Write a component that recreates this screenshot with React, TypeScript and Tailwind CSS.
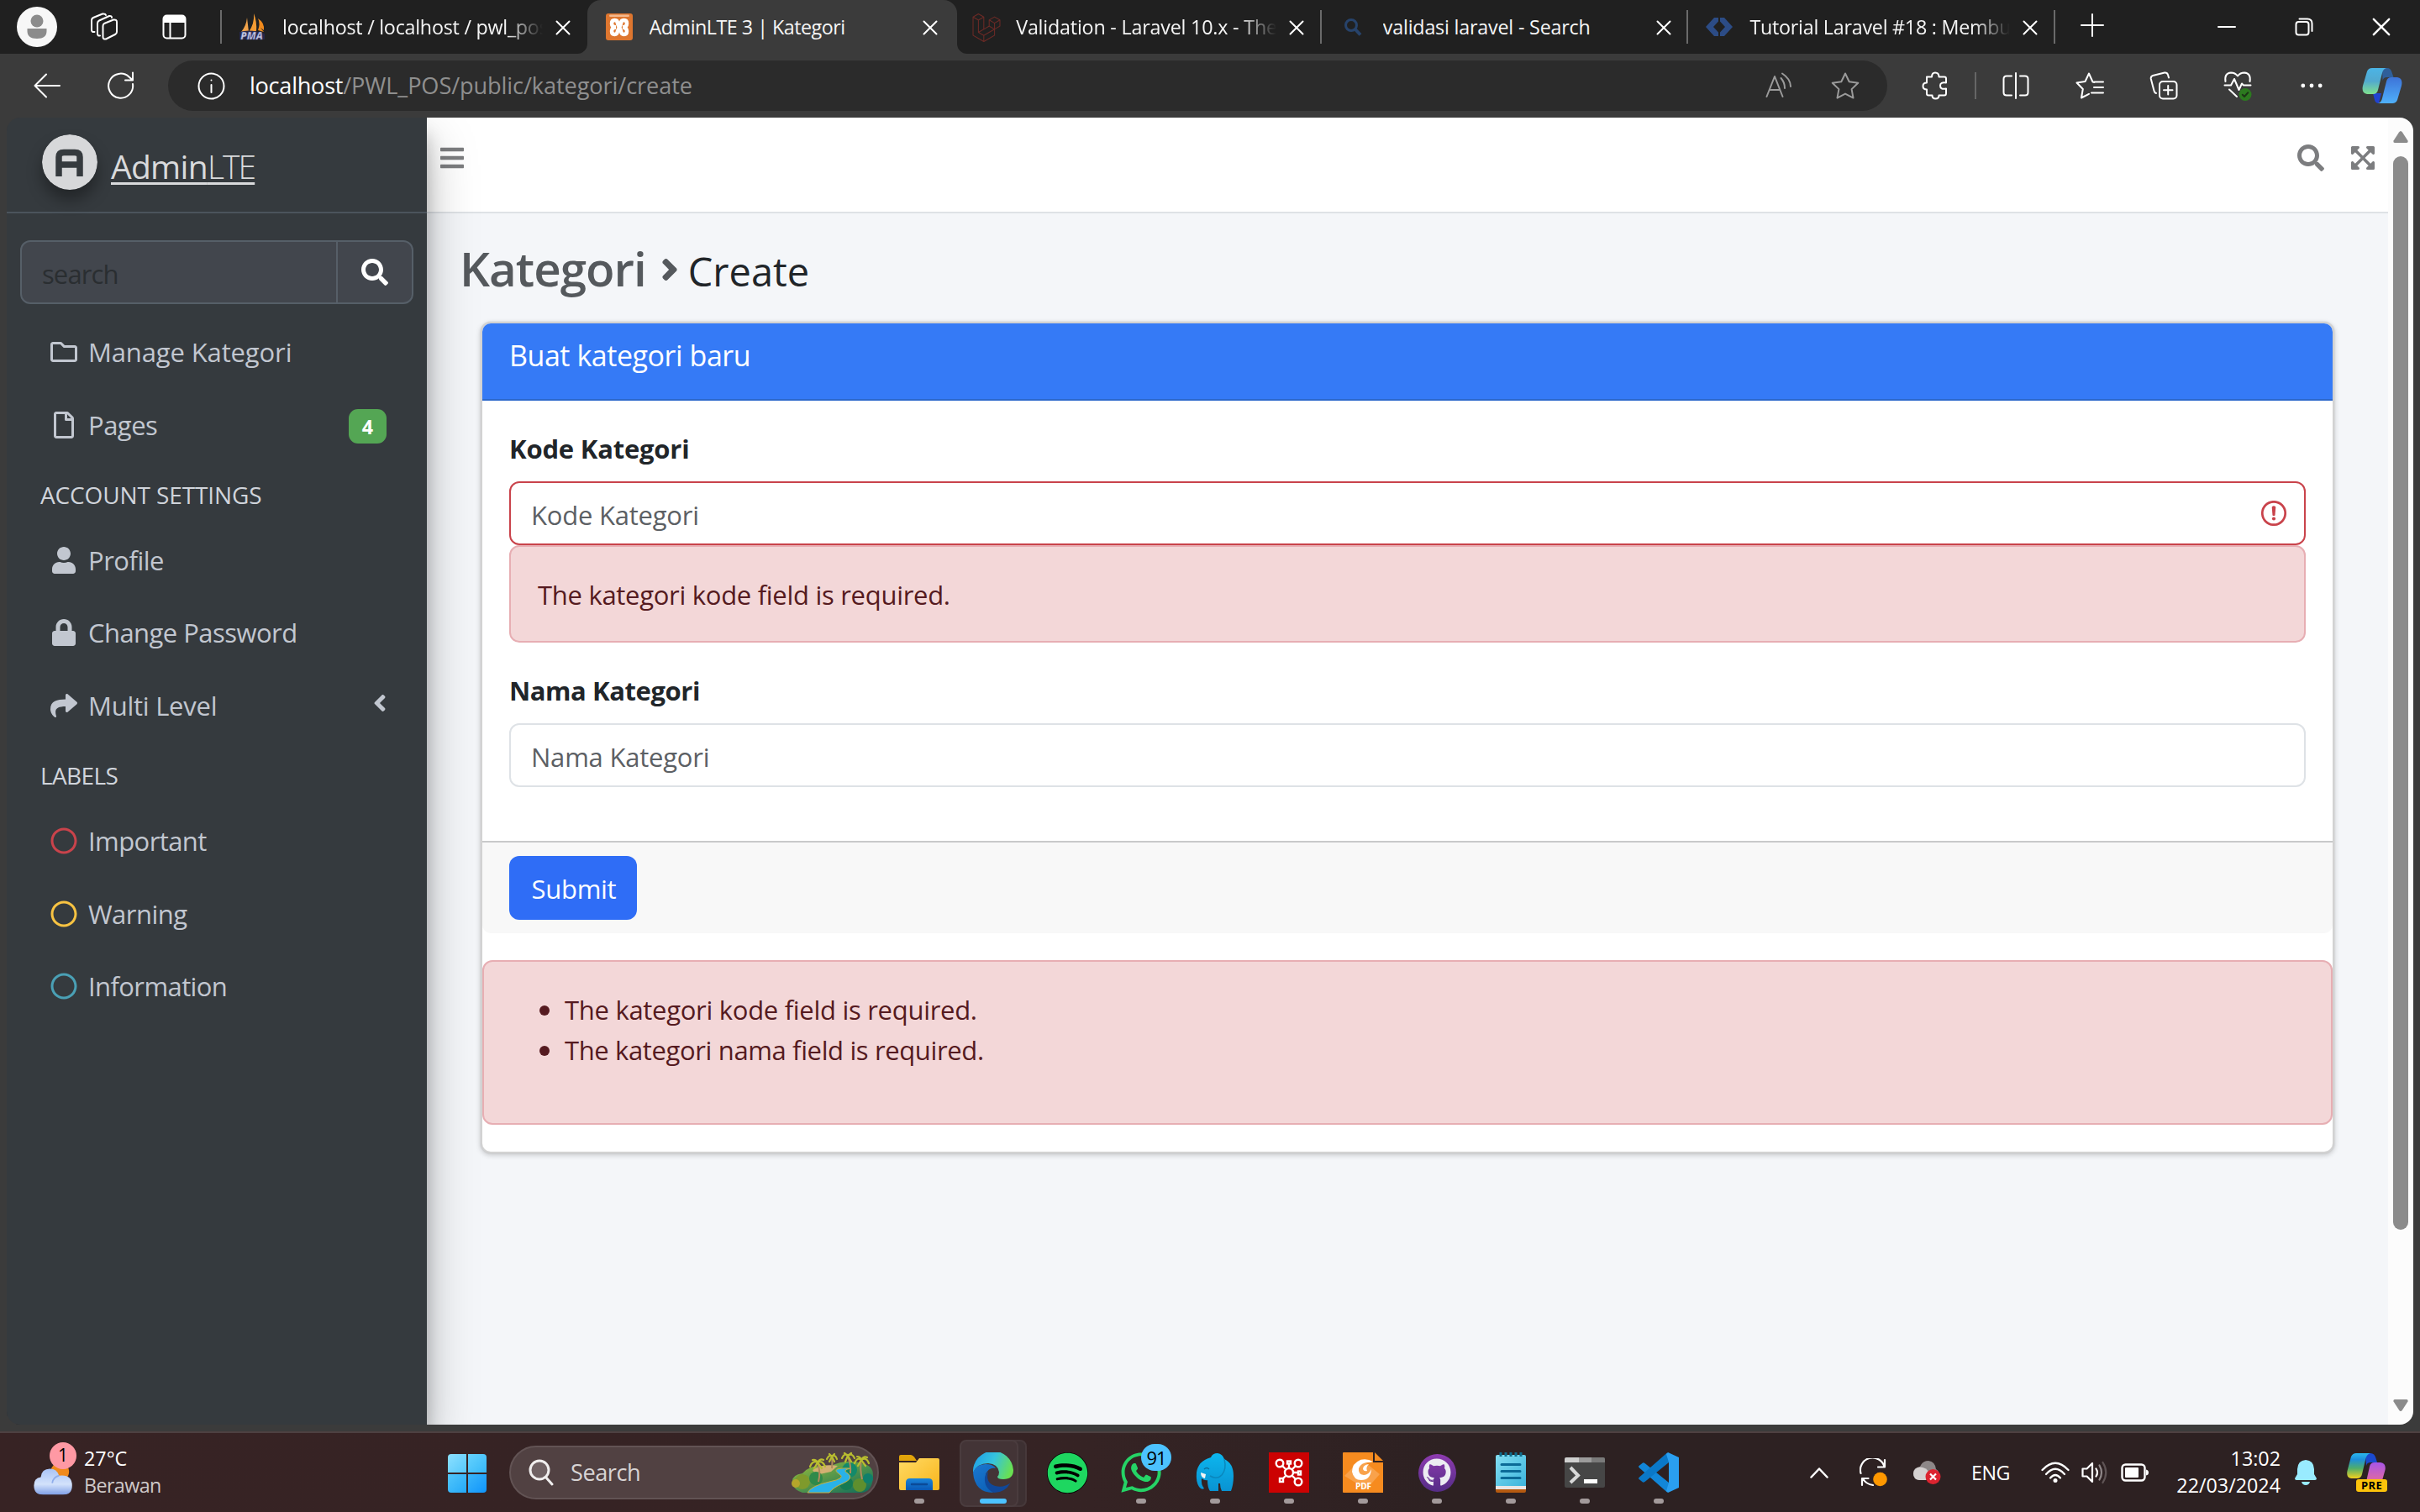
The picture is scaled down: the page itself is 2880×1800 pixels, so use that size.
import React from "react";
import {
  FaAngleLeft,
  FaAngleRight,
  FaBars,
  FaExpandArrowsAlt,
  FaGithub,
  FaLaravel,
  FaLock,
  FaRegCircle,
  FaRegFile,
  FaRegFolder,
  FaSearch,
  FaShare,
  FaSpotify,
  FaUser,
  FaWhatsapp,
} from "react-icons/fa";

type SvgProps = React.SVGProps<SVGSVGElement>;

const Line = ({ children, ...p }: SvgProps) => (
  <svg fill="none" stroke="currentColor" strokeWidth={2} strokeLinecap="round" strokeLinejoin="round" {...p}>
    {children}
  </svg>
);

/* ---------- Browser tab favicons ---------- */

const PmaIcon = () => (
  <svg width="32" height="32" viewBox="0 0 32 32">
    <path d="M10 5 L12 22 L3 22 Q9 15 10 5Z" fill="#f2a34a" />
    <path d="M18 0 Q22 10 21 21 L12 22 Q19 12 18 0Z" fill="#f49b33" />
    <path d="M23 6 Q31 11 30 20 L26 17 L30 22 L23 20 Q26 12 23 6Z" fill="#f08a1c" />
    <path d="M1 22 Q14 18 31 24 L31 31 L1 31Z" fill="#24264a" />
    <text x="15.500" y="31" textAnchor="middle" fontFamily="Open Sans" fontWeight="800" fontStyle="italic" fontSize="12" fill="#c9cbe6" stroke="#4a4f86" strokeWidth="0.5">
      PMA
    </text>
  </svg>
);

const XamppIcon = () => (
  <svg width="32" height="32" viewBox="0 0 32 32">
    <rect width="32" height="32" rx="3" fill="#de762f" />
    <rect x="4" y="1.500" width="24" height="2.500" rx="1.200" fill="#f3b98f" />
    <g fill="none" stroke="#fff" strokeWidth="4.500" strokeLinejoin="round">
      <path d="M12 16.500 Q7 16 7 12 Q7 8 10.500 8 Q14 8 14 12 L18 21 Q18.500 25 21.500 25 Q25 25 25 21 Q25 17 20 16.500" />
      <path d="M20 16.500 Q25 16 25 12 Q25 8 21.500 8 Q18 8 18 12 L14 21 Q13.500 25 10.500 25 Q7 25 7 21 Q7 17 12 16.500" />
    </g>
  </svg>
);

const BingSearchIcon = () => (
  <svg width="32" height="32" viewBox="0 0 32 32" fill="none" stroke="#27436b">
    <circle cx="14" cy="14" r="6.500" strokeWidth="3" />
    <path d="M18.500 18.500 L25 25.500" strokeWidth="4" />
  </svg>
);

const CodeIcon = () => (
  <svg width="32" height="32" viewBox="0 0 32 32">
    <path d="M15 5 H10 L0 16 L10 27 H15 V22.500 L9 16 L15 9.500Z" fill="#2c4c86" />
    <path d="M17 5 H22 L32 16 L22 27 H17 V22.500 L23 16 L17 9.500Z" fill="#2c4c86" />
  </svg>
);

const CloseIcon = ({ s = 18 }: { s?: number }) => (
  <Line width={s} height={s} viewBox="0 0 18 18">
    <path d="M1.500 1.500 L16.500 16.500 M16.500 1.500 L1.500 16.500" />
  </Line>
);

type TabProps = { icon: React.ReactNode; title: string; track: string; active?: boolean; sep?: boolean; fade?: boolean };

const Tab = ({ icon, title, track, active, sep, fade }: TabProps) => (
  <div className="relative flex h-16 w-[436.6px] shrink-0 items-center">
    {active && (
      <>
        <div className="absolute inset-y-0 -left-px w-[440px] rounded-t-2xl bg-[#3b3b3b]" />
        <svg className="absolute bottom-0 -left-[13px]" width="12" height="12" viewBox="0 0 12 12">
          <path d="M12 0 V12 H0 A12 12 0 0 0 12 0Z" fill="#3b3b3b" />
        </svg>
        <svg className="absolute bottom-0 left-[439px] z-10" width="12" height="12" viewBox="0 0 12 12">
          <path d="M0 0 V12 H12 A12 12 0 0 1 0 0Z" fill="#3b3b3b" />
        </svg>
      </>
    )}
    <div className="relative ml-[21px] size-8">{icon}</div>
    <div className={`relative ml-5 w-[310px] overflow-hidden whitespace-nowrap text-[23.3px] leading-8 text-[#f5f5f5] ${track} ${fade ? "[mask-image:linear-gradient(to_right,black_86%,transparent)]" : ""}`}>
      {title}
    </div>
    <div className="relative ml-[15px] pt-0.5 text-white">
      <CloseIcon />
    </div>
    {sep && <div className="absolute right-0 h-10 w-0.5 bg-[#6a6a6a]" />}
  </div>
);

const TabBar = () => (
  <div className="flex h-16 items-center bg-[#202020] pl-5 text-white">
    <svg width="48" height="48" viewBox="0 0 48 48">
      <circle cx="24" cy="24" r="24" fill="#f7f7f7" />
      <circle cx="24" cy="17" r="7.500" fill="#8c8c8c" />
      <path d="M12.500 26 h23 v3 q0 9 -11.500 9 t-11.500 -9z" fill="#8c8c8c" />
    </svg>
    <Line className="ml-[39px]" width="34" height="34" viewBox="0 0 34 34">
      <path d="M17 13 L28 8.500 Q32 8 32 11 V23 Q32 25 30 26 L19 31.500 Q15.500 32 15.500 29 V16 Q15.500 14 17 13Z" />
      <path d="M12 27.500 Q9 28 9 25 V13 Q9 10.500 11 9.500 L23 4 Q26 3.500 26 6" />
      <path d="M5.500 23 Q2 23.500 2 20.500 V9 Q2 7 4 6 L15 1.500 Q18.500 1 19 3" />
    </Line>
    <Line className="ml-[52px]" width="29" height="30" viewBox="0 0 29 30">
      <rect x="1.500" y="1.500" width="26" height="27" rx="4" />
      <path d="M2 6 q0 -4 4 -4 h17 q4 0 4 4 v3 h-25z" fill="currentColor" />
      <path d="M9.500 9 V28" />
    </Line>
    <div className="ml-10 mr-[-1px] h-10 w-0.5 bg-[#6a6a6a]" />
    <Tab icon={<PmaIcon />} title="localhost / localhost / pwl_pos" track="tracking-[-0.25px]" fade />
    <Tab icon={<XamppIcon />} title="AdminLTE 3 | Kategori" track="tracking-[-0.5px]" active />
    <Tab icon={<FaLaravel size={34} color="#6b2a26" />} title="Validation - Laravel 10.x - The" track="tracking-[-0.2px]" sep fade />
    <Tab icon={<BingSearchIcon />} title="validasi laravel - Search" track="tracking-[-0.2px]" sep />
    <Tab icon={<CodeIcon />} title="Tutorial Laravel #18 : Membu" track="tracking-[-0.25px]" sep fade />
    <Line className="ml-[30px] mb-1" width="28" height="28" viewBox="0 0 28 28">
      <path d="M14 1 V27 M1 14 H27" />
    </Line>
    <div className="ml-auto flex">
      <div className="flex w-[92px] justify-center">
        <Line width="22" height="22" viewBox="0 0 22 22">
          <path d="M1 11 H21" />
        </Line>
      </div>
      <div className="flex w-[92px] justify-center">
        <Line width="22" height="22" viewBox="0 0 22 22">
          <rect x="1.500" y="5" width="15" height="15.500" rx="3" />
          <path d="M5.500 1.500 H15 Q20.500 1.500 20.500 7 V16" />
        </Line>
      </div>
      <div className="flex w-[92px] justify-center">
        <CloseIcon s={22} />
      </div>
    </div>
  </div>
);

/* ---------- Address bar ---------- */

const EdgeCopilotIcon = () => (
  <svg width="48" height="44" viewBox="0 0 48 44">
    <defs>
      <linearGradient id="ecA" x1="0" y1="0" x2="0" y2="1">
        <stop offset="0" stopColor="#4bb4e6" />
        <stop offset="0.5" stopColor="#52a9cf" />
        <stop offset="1" stopColor="#7fe08e" />
      </linearGradient>
      <linearGradient id="ecB" x1="0" y1="0" x2="0" y2="1">
        <stop offset="0" stopColor="#3d73d8" />
        <stop offset="1" stopColor="#4fb0fa" />
      </linearGradient>
    </defs>
    <path d="M24 1 h6 q4 0 5.500 5 l2 6 h-8 q-4 0 -5 4z" fill="#2f5f9a" />
    <path d="M13 31 h10 l-3 12 q-4 0 -5 -4z" fill="#2143cf" />
    <path d="M12 1 H29 Q25 2 24 7 L19 27 Q18 32 13 32 H6 Q-1 31 1 22 L6 5 Q7.500 1 12 1Z" fill="url(#ecA)" />
    <path d="M36 43 H19 Q23 42 24 37 L29 17 Q30 12 35 12 H42 Q49 13 47 22 L42 39 Q40.500 43 36 43Z" fill="url(#ecB)" />
  </svg>
);

const ToolButton = ({ children }: { children: React.ReactNode }) => (
  <div className="flex w-[88px] justify-center">{children}</div>
);

const AddressBar = () => (
  <div className="flex h-[76px] items-center bg-[#3b3b3b] pl-10 text-white">
    <Line width="32" height="30" viewBox="0 0 32 30">
      <path d="M31 15 H1.500 M15 1.500 L1.500 15 L15 28.500" />
    </Line>
    <Line className="ml-14" width="32" height="34" viewBox="0 0 32 34">
      <path d="M30 15 A14.500 14.500 0 1 1 25.500 6.500 L30 10.500 M30 1.500 V10.500 H21" />
    </Line>
    <div className="ml-10 flex h-[60px] w-[2046px] items-center rounded-full bg-[#2b2b2b] pl-[35px] pr-[33px]">
      <Line width="33" height="33" viewBox="0 0 33 33">
        <circle cx="16.500" cy="16.500" r="15" />
        <path d="M16.500 15 V24" />
        <circle cx="16.500" cy="9.500" r="1" fill="currentColor" stroke="none" />
      </Line>
      <div className="ml-[29px] whitespace-nowrap text-[27.2px] leading-10">
        <span className="tracking-[-0.3px]">localhost</span>
        <span className="tracking-[-0.12px] text-[#8f8f8f]">/PWL_POS/public/kategori/create</span>
      </div>
      <div className="ml-auto flex items-center text-[#9b9b9b]">
        <Line width="32" height="32" viewBox="0 0 32 32">
          <path d="M1.500 29 L11 5 L20.500 29 M5 21 H17" />
          <path d="M18.500 7 Q23 12 23 19" />
          <path d="M20 1.500 Q30 8 30 17" />
        </Line>
        <Line className="ml-[46px]" width="34" height="32" viewBox="0 0 34 32">
          <path d="M17 1.500 L21.700 11.200 L32.300 12.700 L24.600 20.100 L26.500 30.600 L17 25.600 L7.500 30.600 L9.400 20.100 L1.700 12.700 L12.300 11.200Z" />
        </Line>
      </div>
    </div>
    <Line className="ml-[41px]" width="32" height="34" viewBox="0 0 32 34">
      <path d="M6 6.500 H12 Q12 1.500 16 1.500 Q20.500 1.500 20.500 6.500 H27 Q29 6.500 29 8.500 V13.500 Q22 12.500 22 17 Q22 22 29 20.500 V26 Q29 28.500 27 28.500 H20.500 Q20.500 32.500 16.500 32.500 Q12.500 32.500 12.500 28.500 H8 Q6 28.500 6 26.500 V21.500 Q1.500 21.500 1.500 17.500 Q1.500 13.500 6 13.500Z" />
    </Line>
    <div className="ml-[31px] mr-[3px] h-8 w-0.5 bg-[#666]" />
    <ToolButton>
      <Line width="32" height="34" viewBox="0 0 32 34">
        <path d="M16 2 V32 M11 5.500 H5 Q1.500 5.500 1.500 9 V25 Q1.500 28.500 5 28.500 H11 M21 5.500 H27 Q30.500 5.500 30.500 9 V25 Q30.500 28.500 27 28.500 H21" />
      </Line>
    </ToolButton>
    <ToolButton>
      <Line width="34" height="32" viewBox="0 0 34 32">
        <path d="M22.500 12 L20.500 11.500 L16 1.500 L11.500 11 L1.500 12.500 L8.800 20 L7 30.500 L16 25.800 M22 11.500 H33 M22 18 H33 M19 24.500 H33" />
      </Line>
    </ToolButton>
    <ToolButton>
      <Line width="34" height="34" viewBox="0 0 34 34">
        <rect x="12" y="12" width="20.500" height="20.500" rx="4" />
        <path d="M22.200 17 V27.500 M17 22.200 H27.500" />
        <path d="M8 26 Q6 25.500 5.500 23 L1.800 9 Q1.300 6 4 5 L18 1.500 Q21 1 22 4 L23 7.500" />
      </Line>
    </ToolButton>
    <ToolButton>
      <svg width="34" height="36" viewBox="0 0 34 36" fill="none" stroke="currentColor" strokeWidth="2" strokeLinejoin="round" strokeLinecap="round">
        <path d="M2.500 13 Q1 3 9 2.500 Q14 2.500 17 6.500 Q20 2.500 25 2.500 Q33 3 31.500 13" />
        <path d="M1.500 17.500 H9 L13 10 L18.500 23 L22 15.500 L24 17.500 H32.500" />
        <path d="M7 22.500 L16 31" />
        <circle cx="26" cy="28.500" r="7.500" fill="#2c7a1f" stroke="none" />
        <path d="M22.800 28.800 L25 31 L29.300 26.300" stroke="#1c3516" />
      </svg>
    </ToolButton>
    <ToolButton>
      <svg width="26" height="6" viewBox="0 0 26 6" fill="currentColor">
        <circle cx="2.800" cy="3" r="2.400" />
        <circle cx="13" cy="3" r="2.400" />
        <circle cx="23.200" cy="3" r="2.400" />
      </svg>
    </ToolButton>
    <div className="ml-4">
      <EdgeCopilotIcon />
    </div>
  </div>
);

/* ---------- Sidebar ---------- */

type NavProps = { icon: React.ReactNode; label: string; track: string; right?: React.ReactNode };

const NavItem = ({ icon, label, track, right }: NavProps) => (
  <div className="flex h-[86.4px] items-center pl-[52px] pr-12 text-[#c2c7d0]">
    <div className="size-8 text-[32px]">{icon}</div>
    <div className={`ml-[13px] whitespace-nowrap text-[31px] leading-[48px] ${track}`}>{label}</div>
    <div className="ml-auto">{right}</div>
  </div>
);

const NavHeader = ({ label, track }: { label: string; track: string }) => (
  <div className={`flex h-[75px] items-center pl-10 pt-[5px] text-[28px] leading-10 text-[#d0d4db] ${track}`}>{label}</div>
);

const Sidebar = () => (
  <div className="relative z-10 h-full w-[500px] shrink-0 bg-[#353a3e] shadow-[0_28px_56px_rgba(0,0,0,0.25),0_20px_20px_rgba(0,0,0,0.22)]">
    <div className="flex h-[114px] items-start border-b-2 border-[#4b545c] pl-[42px] pt-5">
      <svg className="rounded-full shadow-[0_12px_18px_rgba(0,0,0,0.35)]" width="66" height="66" viewBox="0 0 66 66">
        <circle cx="33" cy="33" r="33" fill="#d7d8da" />
        <path d="M20 50 V27 Q20 21.500 26 21.500 H39 Q45 21.500 45 27 V50 M20 36 H45" fill="none" stroke="#353a3e" strokeWidth="7.500" />
      </svg>
      <div className="ml-4 mt-3 whitespace-nowrap text-[39px] leading-[52px] text-[#d9dadc] underline decoration-[3px] underline-offset-[4px]">
        <span className="tracking-[-0.7px]">Admin</span>
        <span className="font-light tracking-[-1.900px]">LTE</span>
      </div>
    </div>
    <div className="mx-4 mb-[14px] mt-8 flex h-[76px] w-[468px] rounded-[12px] border-2 border-[#565f68] bg-[#42464d]">
      <div className="flex w-[374px] items-center pl-[24px] pt-[3px] text-[31px] leading-[48px] tracking-[-0.9px] text-[#2a2e31]">search</div>
      <div className="flex flex-1 items-center justify-center border-l-2 border-[#565f68] pr-px text-[32px] text-white">
        <FaSearch />
      </div>
    </div>
    <NavItem icon={<FaRegFolder />} label="Manage Kategori" track="tracking-[-0.13px]" />
    <NavItem
      icon={<FaRegFile />}
      label="Pages"
      track="tracking-[-0.500px]"
      right={<div className="mt-1 flex h-[41px] w-[45px] items-center justify-center rounded-[11px] bg-[#54a654] pt-0.5 text-[23.300px] font-bold text-white">4</div>}
    />
    <NavHeader label="ACCOUNT SETTINGS" track="tracking-[-0.12px]" />
    <NavItem icon={<FaUser />} label="Profile" track="tracking-[-0.500px]" />
    <NavItem icon={<FaLock />} label="Change Password" track="tracking-[-0.55px]" />
    <NavItem
      icon={<FaShare />}
      label="Multi Level"
      track="tracking-[-0.25px]"
      right={<FaAngleLeft className="-mr-2 -mt-1.5" size={32} />}
    />
    <NavHeader label="LABELS" track="tracking-[-0.6px]" />
    <NavItem icon={<FaRegCircle className="text-[#c9434b]" />} label="Important" track="tracking-[-0.58px]" />
    <NavItem icon={<FaRegCircle className="text-[#f8c342]" />} label="Warning" track="tracking-[-0.500px]" />
    <NavItem icon={<FaRegCircle className="text-[#4aa0b5]" />} label="Information" track="tracking-[-0.6px]" />
  </div>
);

/* ---------- Main content ---------- */

const Field = ({ label, labelTrack, invalid }: { label: string; labelTrack: string; invalid?: boolean }) => (
  <>
    <div className={`text-[31px] font-bold leading-[48px] text-[#212529] ${labelTrack}`}>{label}</div>
    <div className={`mt-[15px] flex h-[76px] items-center justify-between rounded-[12px] border-2 bg-white pl-6 pr-[21px] pt-0.5 ${invalid ? "border-[#c9434b]" : "border-[#dee2e6]"}`}>
      <div className="pt-0.5 text-[31px] leading-[48px] tracking-[-0.22px] text-[#5c6064]">{label}</div>
      {invalid && (
        <svg className="-mt-0.5" width="30" height="30" viewBox="0 0 30 30">
          <circle cx="15" cy="15" r="13.700" fill="none" stroke="#c9434b" strokeWidth="2.700" />
          <path d="M12.700 7.500 Q15 4.800 17.300 7.500 L16.500 17.500 Q15 18.500 13.500 17.500Z" fill="#c9434b" />
          <circle cx="15" cy="21.500" r="2.100" fill="#c9434b" />
        </svg>
      )}
    </div>
  </>
);

const errors = [
  { text: "The kategori kode field is required.", track: "tracking-[-0.29px]" },
  { text: "The kategori nama field is required.", track: "tracking-[-0.37px]" },
];

const Card = () => (
  <div className="ml-16 w-[2206px] rounded-[12px] border-2 border-black/[0.175] bg-white shadow-[0_0_2px_rgba(0,0,0,0.125),0_2px_6px_rgba(0,0,0,0.2)]">
    <div className="h-[92px] rounded-t-[10px] border-b-2 border-[#2c67ca] bg-[#357af6] pl-8 pt-[18px] text-[34px] leading-[40px] tracking-[-0.45px] text-white">
      Buat kategori baru
    </div>
    <div className="px-8 pb-16 pt-[33px]">
      <Field label="Kode Kategori" labelTrack="tracking-[-0.2px]" invalid />
      <div className="mb-[33px] flex h-[116px] items-center rounded-[12px] border-2 border-[#e7aeb3] bg-[#f3d7d8] pl-8 pt-0.5 text-[31px] tracking-[-0.29px] text-[#551a20]">
        The kategori kode field is required.
      </div>
      <Field label="Nama Kategori" labelTrack="tracking-[-0.42px]" />
    </div>
    <div className="h-[110px] rounded-b-[10px] border-t-2 border-[#c8c9ca] bg-[#f8f8f8] px-8 py-4">
      <button className="h-[76px] w-[152px] rounded-[12px] bg-[#2f6df6] pl-0.5 pt-0.5 text-[31px] tracking-[-0.3px] text-white">Submit</button>
    </div>
    <div className="my-8 h-[196px] rounded-[12px] border-2 border-[#e7aeb3] bg-[#f3d7d8] pl-[66px] pt-[33px] text-[31px] leading-[48px] text-[#551a20]">
      {errors.map((e) => (
        <div key={e.text} className={`flex items-center ${e.track}`}>
          <span className="mr-[18px] mt-0.5 size-3 rounded-full bg-[#551a20]" />
          {e.text}
        </div>
      ))}
    </div>
  </div>
);

const Main = () => (
  <div className="flex h-full w-[2334px] shrink-0 flex-col bg-[#f4f6f9]">
    <div className="flex h-[114px] shrink-0 items-start border-b-2 border-[#dee2e6] bg-white pl-3.5 pr-3.5 pt-8 text-[32px] text-[#7c7d7f]">
      <FaBars />
      <FaSearch className="ml-auto" />
      <FaExpandArrowsAlt className="ml-[30px]" />
    </div>
    <div className="flex h-[129px] shrink-0 items-center pl-[39px] pt-[6px] text-[#55595d]">
      <div className="flex items-baseline whitespace-nowrap">
        <span className="text-[56.500px] font-semibold leading-[64px] tracking-[-1px]">Kategori</span>
        <FaAngleRight className="-mb-[8px] ml-[8px] h-[40px] w-[40px] stroke-[#55595d] stroke-[14]" />
        <span className="ml-[2px] text-[47px] leading-[64px] text-[#212529]">Create</span>
      </div>
    </div>
    <Card />
  </div>
);

const Scrollbar = () => (
  <div className="flex w-[30px] shrink-0 flex-col items-center bg-[#fcfcfc] pb-4 pl-0 pt-4">
    <svg width="18" height="14" viewBox="0 0 18 14">
      <path d="M9 0 Q10 0 11 1.500 L17.500 11.500 Q18 14 16 14 H2 Q0 14 0.500 11.500 L7 1.500 Q8 0 9 0Z" fill="#8b8b8b" />
    </svg>
    <div className="mt-4 h-[1278px] w-[18px] rounded-full bg-[#8b8b8b]" />
    <svg className="mt-auto" width="18" height="14" viewBox="0 0 18 14">
      <path d="M9 14 Q10 14 11 12.500 L17.500 2.500 Q18 0 16 0 H2 Q0 0 0.500 2.500 L7 12.500 Q8 14 9 14Z" fill="#8b8b8b" />
    </svg>
  </div>
);

/* ---------- Taskbar ---------- */

const WeatherIcon = () => (
  <div className="relative h-16 w-14">
    <svg className="absolute bottom-0.5 left-0.5" width="52" height="40" viewBox="0 0 56 44">
      <defs>
        <linearGradient id="cloud" x1="0" y1="0" x2="0" y2="1">
          <stop offset="0" stopColor="#a9c3f5" />
          <stop offset="0.6" stopColor="#d3e2fb" />
          <stop offset="1" stopColor="#7f9fe6" />
        </linearGradient>
      </defs>
      <circle cx="36" cy="10" r="12" fill="#f08a1c" />
      <path d="M14 40 Q2 40 2 28 Q2 18 11 17 Q12 6 23 6 Q32 6 35 15 Q52 13 52 28 Q52 40 40 40Z" fill="url(#cloud)" />
      <path d="M35 15 Q27 17 26 25" fill="none" stroke="#8fadea" strokeWidth="2" />
    </svg>
    <div className="absolute -top-1 left-[23px] flex size-8 items-center justify-center rounded-full bg-[#ff99a4] text-[21px] text-black">1</div>
  </div>
);

const IslandIcon = () => (
  <svg width="100" height="50" viewBox="0 0 100 50">
    <defs>
      <linearGradient id="hill" x1="0" y1="0" x2="1" y2="1">
        <stop offset="0" stopColor="#9bbf3a" />
        <stop offset="1" stopColor="#0c6b5c" />
      </linearGradient>
    </defs>
    <path d="M2 38 Q0 28 14 26 Q24 14 46 18 Q66 8 84 14 Q98 16 98 28 Q98 48 84 49 H14 Q4 46 2 38Z" fill="url(#hill)" />
    <path d="M26 22 Q38 14 56 17 L48 24 L30 28Z" fill="#d3b072" />
    <circle cx="14" cy="36" r="9" fill="#7f9a2c" />
    <circle cx="6" cy="38" r="5" fill="#b5a62b" />
    <circle cx="30" cy="32" r="8" fill="#2f8a4a" />
    <circle cx="66" cy="38" r="8" fill="#157a52" />
    <circle cx="82" cy="40" r="8" fill="#5f8f2e" />
    <circle cx="92" cy="32" r="6" fill="#0f7f6b" />
    <circle cx="70" cy="22" r="9" fill="#128a6a" />
    <path d="M70 20 Q46 19 58 27 Q66 32 46 36 Q24 41 20 49 H46 Q50 43 62 38 Q76 32 68 26 Q60 22 72 20Z" fill="#29b2e8" stroke="#c8b13e" strokeWidth="1" />
    <g stroke="#b08a5c" strokeWidth="2" fill="none">
      <path d="M32 14 Q36 24 33 36" />
      <path d="M49 6 Q50 14 49 20" />
      <path d="M68 6 Q72 16 71 26" />
      <path d="M84 10 Q82 20 85 33" />
    </g>
    <g stroke="#b9bd2f" strokeWidth="2.200" fill="none" strokeLinecap="round">
      <path d="M23 18 Q26 10 32 13 Q38 10 41 18 M26 10 Q30 9 32 13 Q35 8 39 10 M28 20 L32 13 L37 20" />
      <path d="M43 9 Q46 3 49 6 Q53 3 55 9 M46 3 L49 6 L52 3 M46 12 L49 6 L52 12" />
      <path d="M61 8 Q64 1 68 5 Q73 1 76 8 M64 2 L68 5 L72 2 M65 12 L68 5 L72 12" />
      <path d="M76 14 Q79 6 84 10 Q90 6 93 14 M79 6 Q83 6 84 10 Q87 5 91 7 M80 17 L84 10 L89 17" />
    </g>
  </svg>
);

const ExplorerIcon = () => (
  <svg width="48" height="44" viewBox="0 0 48 44">
    <defs>
      <linearGradient id="fold" x1="0" y1="0" x2="1" y2="1">
        <stop offset="0" stopColor="#ffda63" />
        <stop offset="1" stopColor="#f9b51c" />
      </linearGradient>
      <linearGradient id="foldb" x1="0" y1="0" x2="0" y2="1">
        <stop offset="0" stopColor="#1a84d8" />
        <stop offset="1" stopColor="#0a57b4" />
      </linearGradient>
    </defs>
    <path d="M0 3 Q0 1 2 1 H14 Q16 1 18 3.500 L21 8 H0Z" fill="#e2a40a" />
    <path d="M0 10 H20 L24 5 H46 Q48 5 48 7 V41 Q48 43 46 43 H2 Q0 43 0 41Z" fill="url(#fold)" />
    <path d="M8 43 V34 Q8 29 13 29 H35 Q40 29 40 34 V43Z" fill="url(#foldb)" />
    <path d="M15 36 H33" stroke="#0a4a97" strokeWidth="2.500" strokeLinecap="round" />
  </svg>
);

const EdgeIcon = () => (
  <svg width="48" height="48" viewBox="0 0 48 48">
    <defs>
      <linearGradient id="eA" x1="0" y1="0.200" x2="1" y2="0.500">
        <stop offset="0" stopColor="#1f9fe6" />
        <stop offset="0.500" stopColor="#35c4de" />
        <stop offset="1" stopColor="#69e052" />
      </linearGradient>
      <linearGradient id="eB" x1="0" y1="0" x2="0.600" y2="1">
        <stop offset="0" stopColor="#1b78d0" />
        <stop offset="1" stopColor="#0d62b8" />
      </linearGradient>
    </defs>
    <path d="M0 24 A24 24 0 0 1 48 21 Q48 32 36 32 Q29 32 29 29 Q31 27 31 23.500 Q30 14 18 13 Q5 13 0 24Z" fill="url(#eA)" />
    <path d="M0 24 Q4 14 15 14 Q24 14 27 19 Q19 17 15 26 Q13 38 24 47.900 Q2 48 0 24Z" fill="url(#eB)" />
    <path d="M18 23 Q14 38 29 40.500 Q38 41.500 44.500 36.500 Q38 48 25 48 Q13 43 14 30 Q15 25 18 23Z" fill="#10489a" />
  </svg>
);

const ElephantIcon = () => (
  <svg width="46" height="48" viewBox="0 0 46 48">
    <defs>
      <linearGradient id="ele" x1="0" y1="0" x2="0" y2="1">
        <stop offset="0" stopColor="#0cb6ee" />
        <stop offset="1" stopColor="#0993d2" />
      </linearGradient>
    </defs>
    <path d="M18 6 Q20 1 26 1 Q32 2 34 8 Q45 13 45 28 Q45 38 42 46 H31 Q29 42 29 37 H27 V46 H17 Q14 42 14 33 Q11 34 7 31 Q6 38 10 43 Q7 45 4 41 Q0 35 1 24 Q3 10 18 6Z" fill="url(#ele)" />
    <path d="M34 8 Q37 20 31 27 Q25 33 17 28" fill="none" stroke="#0a87bd" strokeWidth="1.500" />
    <path d="M6 24 L12 26 L11 31 Q6 30 6 24Z" fill="#f4f4f4" />
    <path d="M10 20 Q13 17 16 20" fill="none" stroke="#0a6f9c" strokeWidth="1.300" />
  </svg>
);

const MoleculeIcon = () => (
  <svg width="48" height="48" viewBox="0 0 48 48">
    <rect width="48" height="48" fill="#cc0202" />
    <g fill="none" stroke="#fff" strokeWidth="2.400">
      <circle cx="24" cy="24" r="5" />
      <circle cx="13" cy="13" r="4.300" />
      <circle cx="35" cy="13" r="4.300" />
      <circle cx="35" cy="35" r="4.300" />
      <rect x="13" y="31" width="4" height="4" />
      <rect x="22" y="10.500" width="4" height="3" />
      <rect x="35" y="22.500" width="3" height="4" />
      <path d="M16 16 L20.500 20.500 M32 16 L27.500 20.500 M32 32 L27.500 27.500 M17 31 L20.500 27.500 M24 14 V19 M29 24 H35" />
    </g>
  </svg>
);

const PdfIcon = () => (
  <svg width="48" height="48" viewBox="0 0 48 48">
    <path d="M1 0 H36 V12 H48 V48 H1 Q0 48 0 47 V1 Q0 0 1 0Z" fill="#f68b1f" />
    <path d="M38 0 L48 10 H38Z" fill="#f68b1f" />
    <path d="M2 28 L22 8 L44 26 L28 44Z" fill="#f9a24b" />
    <path d="M36 11 Q29 7 21 9 Q11 13 11 23 Q13 33 22 33 Q33 33 34 20 Q31 27 25 27 Q18 26 19 19 Q22 12 30 12 Q34 12 36 11Z" fill="#fff" />
    <path d="M31 14 Q24 15 24 20 Q25 23 29 22 Q27 18 31 14Z" fill="#fff" />
    <text x="24.500" y="44" textAnchor="middle" fontFamily="Open Sans" fontWeight="700" fontSize="10" fill="#fff">
      PDF
    </text>
  </svg>
);

const GithubDesktopIcon = () => (
  <div className="flex size-[45px] items-center justify-center rounded-full bg-gradient-to-b from-[#8e3bb0] to-[#552c86] text-[#ececf2]">
    <FaGithub size={34} />
  </div>
);

const NotepadIcon = () => (
  <svg width="36" height="48" viewBox="0 0 36 48">
    <defs>
      <linearGradient id="np" x1="0" y1="0" x2="1" y2="1">
        <stop offset="0" stopColor="#83def2" />
        <stop offset="1" stopColor="#3cb4dc" />
      </linearGradient>
    </defs>
    <path d="M0 43 H36 V46 Q36 48 34 48 H2 Q0 48 0 46Z" fill="#b55a10" />
    <rect y="38" width="36" height="6" fill="#e9e6e6" />
    <path d="M0 5 Q0 3 2 3 H34 Q36 3 36 5 V40 H0Z" fill="url(#np)" />
    <path d="M6 0 V5 M12 0 V5 M18 0 V5 M24 0 V5 M30 0 V5" stroke="#0f6d8c" strokeWidth="3" />
    <path d="M7 14.500 H29 M7 22.500 H29 M7 30.500 H29" stroke="#0b6a97" strokeWidth="3" strokeLinecap="round" />
  </svg>
);

const TerminalIcon = () => (
  <svg width="48" height="36" viewBox="0 0 48 36">
    <rect width="48" height="36" rx="2" fill="#464646" />
    <path d="M2 0 H17 V6 H0 V2 Q0 0 2 0Z" fill="#cfcfcf" />
    <rect x="17" width="15" height="6" fill="#9c9c9c" />
    <path d="M32 0 H46 Q48 0 48 2 V6 H32Z" fill="#7a7a7a" />
    <path d="M7 12 L16 21.500 L7 30" fill="none" stroke="#d8d8d8" strokeWidth="4" />
    <rect x="23" y="26" width="16" height="5" fill="#fff" />
  </svg>
);

const VsCodeIcon = () => (
  <svg width="48" height="48" viewBox="0 0 48 48">
    <path d="M0 16.500 L5 12.500 Q6 12 7.500 13 L36 36 V46.500 L34 47.500 L1 18.500 Q0 17.500 0 16.500Z" fill="#1286d8" />
    <path d="M0 31.500 L5 35.500 Q6 36 7.500 35 L36 12 V1.500 L34 0.500 L1 29.500 Q0 30.500 0 31.500Z" fill="#0a78c8" />
    <path d="M35 0 L48 6 V42 L35 48 L33 46 L36 36 V12 L33 2Z" fill="#2a9ff0" />
  </svg>
);

const TaskItem = ({ children, dot = true, active }: { children: React.ReactNode; dot?: boolean; active?: boolean }) => (
  <div className="relative flex h-full w-[88px] items-center justify-center">
    {active && (
      <>
        <div className="absolute left-3 top-2 h-20 w-[72px] rounded-lg border-2 border-[#46383a] bg-[#3d3032]" />
        <div className="absolute left-1 top-2 h-20 w-[70px] rounded-lg border-2 border-[#4a3c3e] bg-[#433436]" />
      </>
    )}
    <div className="relative">{children}</div>
    {dot && (
      <div className={`absolute bottom-2.5 h-1.5 rounded-full ${active ? "w-8 bg-[#4cc2ff]" : "w-3 bg-[#a39a9b]"}`} />
    )}
  </div>
);

const TrayCopilot = () => (
  <div className="relative h-[46px] w-[48px]">
    <svg width="46" height="40" viewBox="0 0 46 40">
      <defs>
        <linearGradient id="tcA" x1="0" y1="0" x2="0" y2="1">
          <stop offset="0" stopColor="#2bb7ee" />
          <stop offset="0.250" stopColor="#1d8fdc" />
          <stop offset="0.600" stopColor="#4fae6a" />
          <stop offset="1" stopColor="#f3d01d" />
        </linearGradient>
        <linearGradient id="tcB" x1="0" y1="0" x2="0" y2="1">
          <stop offset="0" stopColor="#a855e8" />
          <stop offset="1" stopColor="#f2718a" />
        </linearGradient>
      </defs>
      <path d="M22 0 h6 q5 0 6.500 6 l1.500 5 h-8 q-4 0 -5 4z" fill="#1a49cf" />
      <path d="M11 0 H28 Q24 1 22.500 6 L18 25 Q17 30 12 30 H5 Q-1 29 0.500 21 L5 4 Q7 0 11 0Z" fill="url(#tcA)" />
      <path d="M35 40 H18 Q22 39 23 34 L27 16 Q28 11 33 11 H40 Q47 12 45.500 20 L41 36 Q39 40 35 40Z" fill="url(#tcB)" />
    </svg>
    <div className="absolute bottom-0 right-0 flex h-[15px] w-[37px] items-center justify-center rounded-[3px] bg-[#fcc30b] text-[13px] font-bold leading-none tracking-[0.3px] text-black">PRE</div>
  </div>
);

const Taskbar = () => (
  <div className="flex h-24 items-center border-t-2 border-[#4e4041] bg-gradient-to-r from-[#372324] via-[#352324] via-45% to-[#2d2122] to-60% text-white">
    <div className="flex w-[533px] items-center pl-9">
      <WeatherIcon />
      <div className="-mt-0.5 ml-2 text-[23.300px] leading-8">
        <div>27°C</div>
        <div className="tracking-[-0.6px] text-[#cfc9c9]">Berawan</div>
      </div>
    </div>
    <div className="mt-0.5 grid h-[46px] w-[46px] grid-cols-2 gap-0.5">
      <div className="rounded-tl-sm bg-gradient-to-br from-[#8be0ff] to-[#55c8fb]" />
      <div className="rounded-tr-sm bg-gradient-to-br from-[#64d2fd] to-[#35b8f8]" />
      <div className="rounded-bl-sm bg-gradient-to-br from-[#50c6fb] to-[#22a9f8]" />
      <div className="rounded-br-sm bg-gradient-to-br from-[#38b6fa] to-[#0d94fb]" />
    </div>
    <div className="ml-[27px] flex h-16 w-[440px] items-center rounded-full border-2 border-[#625354] bg-[#514142] pl-[21px] pr-[3px]">
      <Line width="30" height="32" viewBox="0 0 30 32" stroke="#f0eeee" strokeWidth="3">
        <circle cx="13" cy="13" r="11" fill="#6f6163" />
        <path d="M20.500 21.500 L28 30" />
      </Line>
      <span className="ml-[20px] text-[27.200px] leading-10 tracking-[-0.500px] text-[#d8d4d4]">Search</span>
      <div className="ml-auto">
        <IslandIcon />
      </div>
    </div>
    <div className="ml-1 flex h-full">
      <TaskItem><ExplorerIcon /></TaskItem>
      <TaskItem active><EdgeIcon /></TaskItem>
      <TaskItem dot={false}>
        <div className="rounded-full bg-black">
          <FaSpotify size={49} color="#1ed760" />
        </div>
      </TaskItem>
      <TaskItem>
        <FaWhatsapp size={54} color="#25d366" />
        <div className="absolute -top-[7px] left-[27px] flex h-8 w-9 items-center justify-center rounded-full bg-[#4cc2ff] text-[22px] tracking-[-1px] text-black">91</div>
      </TaskItem>
      <TaskItem><ElephantIcon /></TaskItem>
      <TaskItem><MoleculeIcon /></TaskItem>
      <TaskItem><PdfIcon /></TaskItem>
      <TaskItem><GithubDesktopIcon /></TaskItem>
      <TaskItem><NotepadIcon /></TaskItem>
      <TaskItem><TerminalIcon /></TaskItem>
      <TaskItem><VsCodeIcon /></TaskItem>
    </div>
    <div className="ml-auto flex items-center pr-[39px]">
      <Line width="22" height="13" viewBox="0 0 22 13" strokeWidth={2.500}>
        <path d="M1.500 11.500 L11 1.500 L20.500 11.500" />
      </Line>
      <svg className="ml-[37px]" width="33" height="34" viewBox="0 0 33 34" fill="none" stroke="#fff" strokeWidth="2.200" strokeLinecap="round" strokeLinejoin="round">
        <path d="M1.500 18 A14.500 14.500 0 0 1 29.500 10 M30 2 V10.500 H22" />
        <path d="M16 32 Q8 31 4 24.500 M3 32 V24 H10.500" />
        <circle cx="24.500" cy="25" r="8.300" fill="#ff9800" stroke="none" />
      </svg>
      <svg className="ml-[31px]" width="34" height="30" viewBox="0 0 34 30">
        <path d="M7 24 Q0 23 0 16 Q0 9 8 8 Q11 1 18 1 Q26 2 27 11 Q31 13 30 18 L20 24Z" fill="#8d8788" />
        <path d="M7 24 Q0 23 0 16 Q1 9 8 8.500 Q15 9 18 14 L15 24Z" fill="#d5d1d1" />
        <circle cx="23.500" cy="20" r="9" fill="#dc2430" />
        <path d="M20 16.500 L27 23.500 M27 16.500 L20 23.500" stroke="#fff" strokeWidth="2.200" />
      </svg>
      <span className="ml-[35px] w-[46px] text-[23.300px] tracking-[-0.5px]">ENG</span>
      <svg className="ml-[37px]" width="34" height="26" viewBox="0 0 34 26" fill="none" stroke="#fff" strokeWidth="2.300" strokeLinecap="round">
        <path d="M1.500 10 Q17 -6.500 32.500 10" />
        <path d="M6 15 Q17 2.500 28 15" />
        <path d="M11 19.500 Q17 12.500 23 19.500" />
        <circle cx="17" cy="22.500" r="2.500" fill="#fff" stroke="none" />
      </svg>
      <svg className="ml-[14px]" width="34" height="28" viewBox="0 0 34 28" fill="none" stroke="#fff" strokeWidth="2.200" strokeLinejoin="round" strokeLinecap="round">
        <path d="M1.500 9.500 H6.500 L13 3 V25 L6.500 18.500 H1.500Z" />
        <path d="M17.500 9.500 Q20.500 14 17.500 18.500" />
        <path d="M21.500 5.500 Q26.500 14 21.500 22.500" stroke="#8f8788" />
        <path d="M25.500 2 Q33 14 25.500 26" stroke="#5f5455" />
      </svg>
      <svg className="ml-[13px]" width="34" height="22" viewBox="0 0 34 22">
        <rect x="1.500" y="1.500" width="27" height="19" rx="4" fill="none" stroke="#fff" strokeWidth="2.400" />
        <rect x="5" y="5" width="16" height="12" rx="1" fill="#fff" />
        <path d="M30 7.500 Q33 8 33 11 Q33 14 30 14.500Z" fill="#fff" />
      </svg>
      <div className="-mt-0.5 ml-[20px] w-[136px] text-right text-[23.300px] leading-8">
        <div>13:02</div>
        <div>22/03/2024</div>
      </div>
      <svg className="ml-[16px]" width="28" height="32" viewBox="0 0 28 32">
        <path d="M14 1 Q23.500 1.500 24 12 V18 L27 23 Q27 25 25 25 H3 Q1 25 1 23 L4 18 V12 Q4.500 1.500 14 1Z M9 27 H19 Q18 31 14 31 Q10 31 9 27Z" fill="#99ebff" />
      </svg>
      <div className="ml-[35px]">
        <TrayCopilot />
      </div>
    </div>
  </div>
);

export default function App() {
  return (
    <div className="flex h-[1800px] w-[2880px] flex-col overflow-hidden bg-[#3b3b3b] font-['Open_Sans','Noto_Sans',sans-serif]">
      <TabBar />
      <AddressBar />
      <div className="mb-2 ml-2 flex h-[1556px] w-[2864px] shrink-0 overflow-hidden rounded-[16px]">
        <Sidebar />
        <Main />
        <Scrollbar />
      </div>
      <Taskbar />
    </div>
  );
}
